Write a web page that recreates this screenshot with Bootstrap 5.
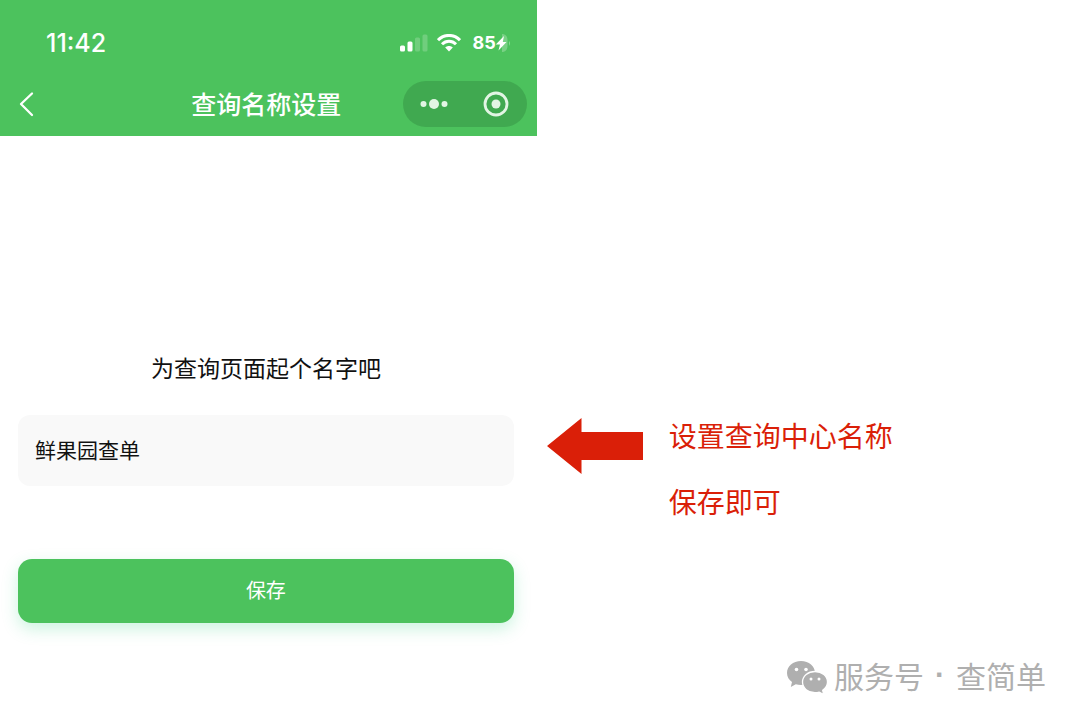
<!DOCTYPE html>
<html lang="zh-CN">
<head>
<meta charset="utf-8">
<meta name="viewport" content="width=device-width, initial-scale=1">
<title>查询名称设置</title>
<link href="https://cdn.jsdelivr.net/npm/bootstrap@5.3.0/dist/css/bootstrap.min.css" rel="stylesheet">
<style>
  :root { --brand: #4cc25d; --hint: #da1f08; }
  body { font-family: "Noto Sans CJK SC", sans-serif; background: #fff; color: #111; }
  .phone { flex: 0 0 49.7%; }
  .app-header { background: var(--brand); color: #fff; }
  .status-bar { height: 72px; padding: 27px 27px 0 46px; }
  .clock { font: 500 25px/32px Inter, sans-serif; }
  .battery-text { font: 700 18px/24px Inter, sans-serif; }
  .title-bar { height: 64px; padding: 0 10px 0 16px; display: grid; grid-template-columns: 1fr auto 1fr; }
  .page-title { font-size: 25px; line-height: 36px; font-weight: 500; padding: 0 10px 2px 0; }
  .capsule { width: 124px; height: 46px; background: #40a950; padding: 0 16px; }
  .setup-form { padding: 213px 23px 0 18px; }
  .prompt { font-size: 23px; line-height: 36px; margin-bottom: 30px; }
  .name-input, .name-input:focus { height: 71px; border: 0; border-radius: 12px; background: #f9f9f9; color: #111; font-size: 21px; padding: 0 17px 4px; }
  .save-btn { height: 64px; margin-top: 73px; border: 0; border-radius: 14px; background: var(--brand); color: #fff; font-size: 20px; padding: 0 0 2px; box-shadow: 0 6px 16px rgba(50, 210, 130, .25); }
  .save-btn:hover { background: #43b354; color: #fff; }
  .hint { padding: 402px 10px 0; gap: 26px; color: var(--hint); font-size: 28px; line-height: 66px; }
  .hint-arrow { margin-top: 16px; }
  .watermark { padding: 0 34px 20px; gap: 6px; color: #afafaf; font-size: 30px; line-height: 44px; }
  .account { gap: 11px; padding-bottom: 4px; }
  .separator { font-family: "Liberation Sans", sans-serif; font-weight: 700; }
</style>
</head>
<body>
<main class="d-flex min-vh-100">
  <section class="phone">
    <header class="app-header">
      <div class="status-bar d-flex align-items-start justify-content-between">
        <div class="clock">11:42</div>
        <div class="d-flex align-items-center gap-2 mt-1">
          <svg width="30" height="20" viewBox="0 0 30 20" fill="#fff" aria-label="信号"><rect x="1" y="12.500" width="5" height="6" rx="1.500"/><rect x="8.500" y="8.500" width="5" height="10" rx="1.500"/><g opacity=".2"><rect x="16" y="4.500" width="5" height="14" rx="1.500"/><rect x="23.500" y="1.500" width="5" height="17" rx="1.500"/></g></svg>
          <svg width="24" height="18" viewBox="0 0 24 18" fill="none" stroke="#fff" stroke-width="3" aria-label="无线网络"><path d="M1 6.200C7-.2 17-.2 23 6.200M5 10.300c4-4 10-4 14 0"/><path d="M8.200 13.600c2.200-2 5.400-2 7.600 0L12 17.500z" fill="#fff" stroke="none"/></svg>
          <div class="d-flex align-items-center ms-1">
            <span class="battery-text">85</span>
            <svg width="14" height="20" viewBox="0 0 14 20" overflow="visible" aria-label="充电中"><path d="M6 1h1q4.500 1 4.500 6v6q0 5-4.500 6H6z" fill="#fff" opacity=".25"/><path d="M13 8q2 2 0 5z" fill="#fff" opacity=".35"/><path d="M8 3L-.2 11.500h4.200l-1.500 6 8-8.500H6.800z" fill="#fff"/></svg>
          </div>
        </div>
      </div>
      <nav class="title-bar align-items-center">
        <a href="#" aria-label="返回" class="d-inline-flex"><svg width="20" height="26" viewBox="0 0 20 26" fill="none" stroke="#fff" stroke-width="2.300" stroke-linecap="round" stroke-linejoin="round"><path d="M16 2.500L5 13l11 11"/></svg></a>
        <h1 class="page-title m-0">查询名称设置</h1>
        <div class="capsule rounded-pill d-flex align-items-center justify-content-between ms-auto">
          <button type="button" class="btn p-0 border-0 d-flex" aria-label="更多"><svg width="30" height="12" viewBox="0 0 30 12" fill="#e2f5e4"><circle cx="4.500" cy="6" r="3"/><circle cx="15" cy="6" r="5"/><circle cx="25.500" cy="6" r="3"/></svg></button>
          <button type="button" class="btn p-0 border-0 d-flex" aria-label="关闭"><svg width="28" height="28" viewBox="0 0 28 28"><circle cx="13" cy="14" r="11" fill="none" stroke="#e2f5e4" stroke-width="2.800"/><circle cx="13" cy="14" r="4.500" fill="#e2f5e4"/></svg></button>
        </div>
      </nav>
    </header>
    <form class="setup-form">
      <label for="queryName" class="prompt d-block text-center">为查询页面起个名字吧</label>
      <input id="queryName" type="text" class="form-control name-input shadow-none" value="鲜果园查单">
      <button type="button" class="btn save-btn w-100">保存</button>
    </form>
  </section>

  <aside class="flex-grow-1 d-flex flex-column justify-content-between">
    <div class="hint d-flex align-items-start">
      <svg class="hint-arrow flex-shrink-0" width="96" height="56" viewBox="0 0 96 56" fill="#da1f08" aria-hidden="true"><path d="M0 28L34.500 0v14H96v28H34.500v14z"/></svg>
      <div>
        <p class="m-0">设置查询中心名称</p>
        <p class="m-0">保存即可</p>
      </div>
    </div>
    <footer class="watermark d-flex align-items-center justify-content-end">
      <svg width="42" height="36" viewBox="0 0 42 36" aria-hidden="true"><path d="M15 2C7 2 1 7.200 1 14c0 4 2 7 5 9l-1.200 5 5-2.700c1.700.5 3.400.7 5.200.7 8 0 14-5.200 14-12S23 2 15 2z" fill="#afafaf"/><path d="M29 12.500c-7 0-12.500 4.600-12.500 10.600S22 33.700 29 33.700c1.500 0 2.900-.2 4.200-.6l4.500 2.400-1-4.200c3-2 4.800-4.900 4.800-8.200 0-6-5.500-10.600-12.500-10.600z" fill="#afafaf" stroke="#fff" stroke-width="1.300"/><g fill="#fff"><circle cx="10.500" cy="10.500" r="1.800"/><circle cx="20" cy="10.500" r="1.800"/><circle cx="25" cy="20" r="1.500"/><circle cx="33" cy="20" r="1.500"/></g></svg>
      <div class="account d-flex"><span>服务号</span><span class="separator">·</span><span>查简单</span></div>
    </footer>
  </aside>
</main>
<script src="https://cdn.jsdelivr.net/npm/bootstrap@5.3.0/dist/js/bootstrap.bundle.min.js"></script>
</body>
</html>
